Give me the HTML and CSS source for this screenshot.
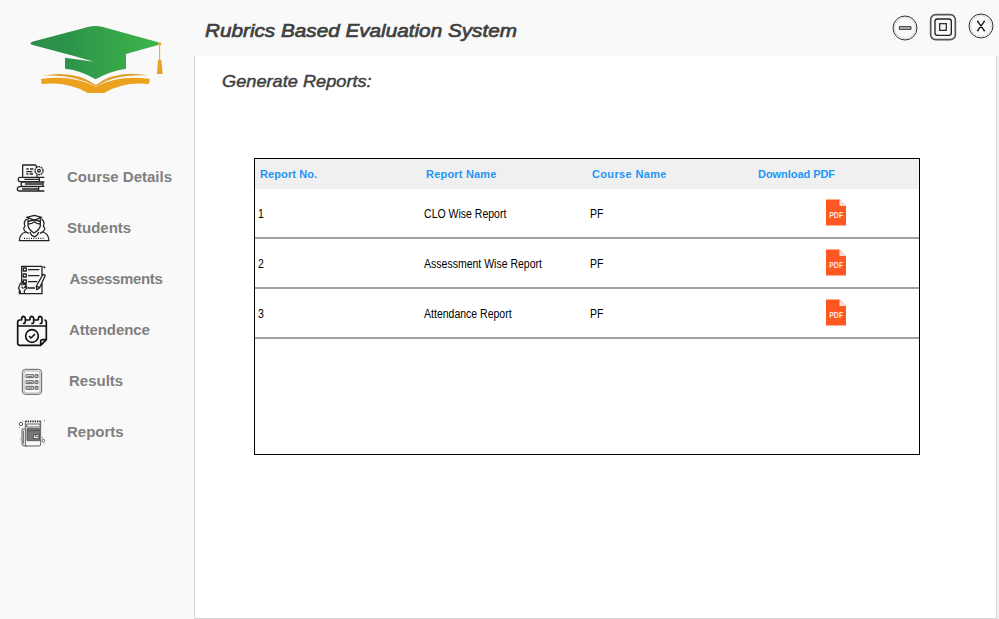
FILE: index.html
```html
<!DOCTYPE html>
<html lang="en">
<head>
<meta charset="utf-8">
<title>Rubrics Based Evaluation System</title>
<link rel="stylesheet" href="styles.css">
</head>
<body>
<div class="app">
  <aside class="sidebar">
    <svg class="logo" viewBox="0 0 480 270">
      <defs><linearGradient id="cap" gradientUnits="userSpaceOnUse" x1="31" y1="0" x2="420" y2="0"><stop offset="0" stop-color="#2f8f4c"/><stop offset=".25" stop-color="#2b924a"/><stop offset=".6" stop-color="#35a349"/><stop offset="1" stop-color="#3cb54a"/></linearGradient></defs>
      <path fill="url(#cap)" d="M31 85Q34 81 42 79L204 36Q225 30 246 35L415 82Q422 86 414 90L318 117V161Q270 168 227 193Q184 166 135 161V128L222 140L165 124L38 90Q31 88 31 85Z"/>
      <path fill="none" stroke="#e5a72f" stroke-width="3" d="M419 88V136"/>
      <circle cx="419" cy="87" r="5" fill="#e5a72f"/>
      <path fill="#e8a126" d="M414 135H424L428 177H411Z"/>
      <path fill="#eda21f" d="M63 192Q155 178 227 215Q298 178 390 192L386 207Q310 199 252 234H203Q145 199 65 207Z"/>
      <path fill="#e0a02b" d="M68 182Q165 164 227 210Q288 164 384 181Q288 176 229 214H225Q165 177 68 182Z"/>
    </svg>
    <nav class="menu">
      <a class="item"><svg class="icon" viewBox="6 6 120 120">
        <path d="M38 65V30H76L81 36M38 30V65M81 60V66M49 42H56M60 42H70M49 50H67M49 57H55M59 57H69"/>
        <circle cx="87" cy="47" r="12" stroke-dasharray="6 1.5"/><circle cx="87" cy="47" r="4"/>
        <path d="M103 67H31Q24 67 25 74Q25 80 31 80H89M43 73H88M88 68V80M35 81H103M36 82Q31 86 35 94H103M45 87H99M99 83V94M88 95H29Q22 96 22 102Q22 108 29 108H103M36 102H86M86 97V108"/>
      </svg><span>Course Details</span></a>
      <a class="item"><svg class="icon" viewBox="6 159 120 120">
        <path d="M50 187L73 181L95 187L73 195ZM54 190V200Q73 190 91 200V190M54 200V213Q58 226 72 234Q87 226 91 213V200M55 207Q65 207 73 200Q81 207 90 207M50 192Q39 201 45 214Q37 221 46 230L56 235M95 192Q106 201 100 214Q109 221 99 230L90 235M47 231Q29 236 28 257H117Q116 236 98 231M60 231Q64 243 73 245Q82 243 86 231"/>
        <path d="M42 250H105" stroke-dasharray="3 4"/>
      </svg><span>Students</span></a>
      <a class="item assessments"><svg class="icon" viewBox="6 12 120 120">
        <path d="M35 81V34H96V63M96 82V116H28V108M40 39H49V48H40ZM40 57H49V66H40ZM40 75H49V84H40ZM54 44H88M54 62H88M54 80H82M53 99H75M103 34V40M100 37H106M99 58L106 61L89 98L80 104L79 93ZM81 94L89 98M33 83Q29 89 27 95Q24 101 31 109V115M36 92V79Q40 78 41 88L48 86Q50 90 43 98L50 94V100L43 107V115M35 96L40 101"/>
      </svg><span>Assessments</span></a>
      <a class="item attendance"><svg class="icon heavy" viewBox="6 165 120 120">
        <path d="M35 195H29Q23 195 23 202V264Q23 271 30 271H92L109 254V202Q109 195 103 195M46 195H60M72 195H85M23 213H109M92 271V259Q92 254 98 254H109M39 205Q45 207 46 200V190Q45 184 39 184Q34 186 35 196M64 205Q71 207 71 200V190Q70 184 64 184Q59 186 60 196M89 205Q96 207 96 200V190Q95 184 89 184Q84 186 85 196"/>
        <circle cx="66" cy="243" r="19"/><path d="M57 243L63 249L75 237"/>
      </svg><span>Attendence</span></a>
      <a class="item results"><svg class="icon grey" viewBox="6 9 120 120">
        <rect x="37" y="34" width="58" height="75" rx="10"/><rect x="42" y="39" width="48" height="66" rx="6" class="soft"/>
        <path d="M48 50H70V59H48ZM75 50H84V59H75ZM48 68H70V77H48ZM75 68H84V77H75ZM48 85H70V94H48ZM75 85H84V94H75ZM52 55H67M77 55L83 52M52 73H67M77 73L83 70M52 90H67M77 90L83 87"/>
      </svg><span>Results</span></a>
      <a class="item"><svg class="icon grey" viewBox="6 162 120 120">
        <path fill="#777" d="M51 212H89V248H51Z"/><path fill="#fff" stroke="#444" d="M71 230H87V242H71Z"/>
        <path d="M46 190V264H87Q92 264 92 258V190M46 213H36V258Q36 264 43 264H50M50 198H90V207H50ZM51 218H89M77 230V236H87M40 218V258"/>
        <path class="dark" d="M46 190H94" stroke-dasharray="4 3"/>
        <circle cx="33" cy="198" r="5"/><circle cx="100" cy="248" r="4"/><path d="M102 188H105M38 188V190M96 238H99M30 243H32M28 208H30M102 257V259"/>
      </svg><span>Reports</span></a>
    </nav>
  </aside>
  <main class="content">
    <header class="topbar">
      <h1>Rubrics Based Evaluation System</h1>
      <svg class="controls" viewBox="0 0 357 210">
        <g fill="none" stroke="#333" stroke-width="3">
          <circle cx="75" cy="84" r="36"/><circle cx="75" cy="84" r="31" stroke="#aaa" stroke-width="2" stroke-dasharray="5 3"/>
          <path fill="#bbb" d="M58 80H93V88H58Z"/>
          <rect x="152" y="44" width="74" height="75" rx="15" stroke="#555" stroke-width="5"/><rect x="165" y="57" width="49" height="49" rx="7" stroke="#222" stroke-width="4"/><rect x="179" y="71" width="20" height="20" stroke-width="4"/>
          <circle cx="303" cy="78" r="36"/><circle cx="303" cy="78" r="31" stroke="#aaa" stroke-width="2" stroke-dasharray="5 3"/>
          <path stroke="#111" stroke-width="4" d="M293 64L313 92M313 64L293 92M291 64H296M310 64H315M291 92H296M310 92H315"/>
        </g>
      </svg>
    </header>
    <section class="panel">
      <h2>Generate Reports:</h2>
      <div class="grid">
        <div class="row head"><span>Report No.</span><span>Report Name</span><span>Course Name</span><span>Download PDF</span></div>
        <div class="row"><span>1</span><span>CLO Wise Report</span><span>PF</span><svg class="pdf" viewBox="0 0 20 27"><path fill="#ff5722" d="M0 .5H13.5L20 7V26.5H0Z"/><path fill="#fbe0d8" d="M13.5 .5L20 7H13.5Z"/><text x="3.2" y="19" textLength="14" lengthAdjust="spacingAndGlyphs">PDF</text></svg></div>
        <div class="row"><span>2</span><span>Assessment Wise Report</span><span>PF</span><svg class="pdf" viewBox="0 0 20 27"><path fill="#ff5722" d="M0 .5H13.5L20 7V26.5H0Z"/><path fill="#fbe0d8" d="M13.5 .5L20 7H13.5Z"/><text x="3.2" y="19" textLength="14" lengthAdjust="spacingAndGlyphs">PDF</text></svg></div>
        <div class="row"><span>3</span><span>Attendance Report</span><span>PF</span><svg class="pdf" viewBox="0 0 20 27"><path fill="#ff5722" d="M0 .5H13.5L20 7V26.5H0Z"/><path fill="#fbe0d8" d="M13.5 .5L20 7H13.5Z"/><text x="3.2" y="19" textLength="14" lengthAdjust="spacingAndGlyphs">PDF</text></svg></div>
      </div>
    </section>
  </main>
</div>
</body>
</html>
```
FILE: styles.css
```css
* { box-sizing: border-box; }
body { margin: 0; font-family: "Liberation Sans", Arial, sans-serif; background: #f9f9f9; }
.app { display: grid; grid-template-columns: 194px 1fr; width: 999px; height: 619px; overflow: hidden; }
.sidebar { display: flex; flex-direction: column; }
.logo { width: 160px; height: 90px; margin: 15px 0 46px 20px; }
.menu { display: flex; flex-direction: column; }
.item { display: flex; align-items: center; height: 51px; padding-left: 12px; color: #808080; font-size: 15px; font-weight: bold; white-space: nowrap; }
.item span { margin-left: 15px; }
.item.assessments span { margin-left: 17.5px; letter-spacing: -.35px; }
.item.attendance span, .item.results span { margin-left: 17px; }
.item.attendance span { letter-spacing: -.1px; }
.icon { width: 40px; height: 40px; flex: none; fill: none; stroke: #222; stroke-width: 3.8; stroke-linejoin: round; }
.icon.heavy { stroke: #111; stroke-width: 5; }
.icon.grey { stroke: #555; stroke-width: 2.8; }
.icon .soft { stroke: #aaa; }
.icon .dark { stroke: #222; stroke-width: 5; }
.content { display: flex; flex-direction: column; }
.topbar { display: flex; justify-content: space-between; height: 56px; padding-left: 11px; }
h1, h2 { margin: 0; color: #404040; font-style: italic; font-weight: normal; white-space: nowrap; transform-origin: left; }
h1 { font-size: 19px; line-height: 22px; padding-top: 20px; -webkit-text-stroke: .7px #404040; transform: scaleX(1.09); }
.controls { width: 119px; height: 70px; flex: none; }
.panel { flex: 1; margin-right: 2px; padding: 16px 0 0 27px; background: #fff; border: solid #d5d5d5; border-width: 0 1px 1px; box-shadow: 2px 0 #f0f0f0; }
h2 { width: max-content; font-size: 17px; line-height: 20px; -webkit-text-stroke: .45px #404040; transform: scaleX(1.07); }
.grid { width: 666px; height: 297px; margin: 66px 0 0 32px; border: 1px solid #000; }
.row { display: grid; grid-template-columns: 166px 166px 166px 166px; align-items: center; height: 50px; border-bottom: 2px solid #a0a0a0; font-size: 12px; color: #000; }
.row span { padding: 2px 0 0 3.5px; transform: scaleX(.875); transform-origin: left; white-space: nowrap; }
.row.head { height: 30px; border: 0; background: #f0f0f0; color: #1e96f5; font-size: 11px; font-weight: bold; letter-spacing: .1px; }
.row.head span { padding: 0 0 0 5px; transform: none; }
.row.head span:nth-child(2) { letter-spacing: .2px; }
.row.head span:nth-child(3) { letter-spacing: .35px; }
.row.head span:nth-child(4) { letter-spacing: -.05px; }
.pdf { width: 20px; height: 27px; justify-self: center; margin: 0 1px 1px 0; }
.pdf text { font: bold 8.5px "Liberation Sans", sans-serif; fill: #ffe3da; }
```
